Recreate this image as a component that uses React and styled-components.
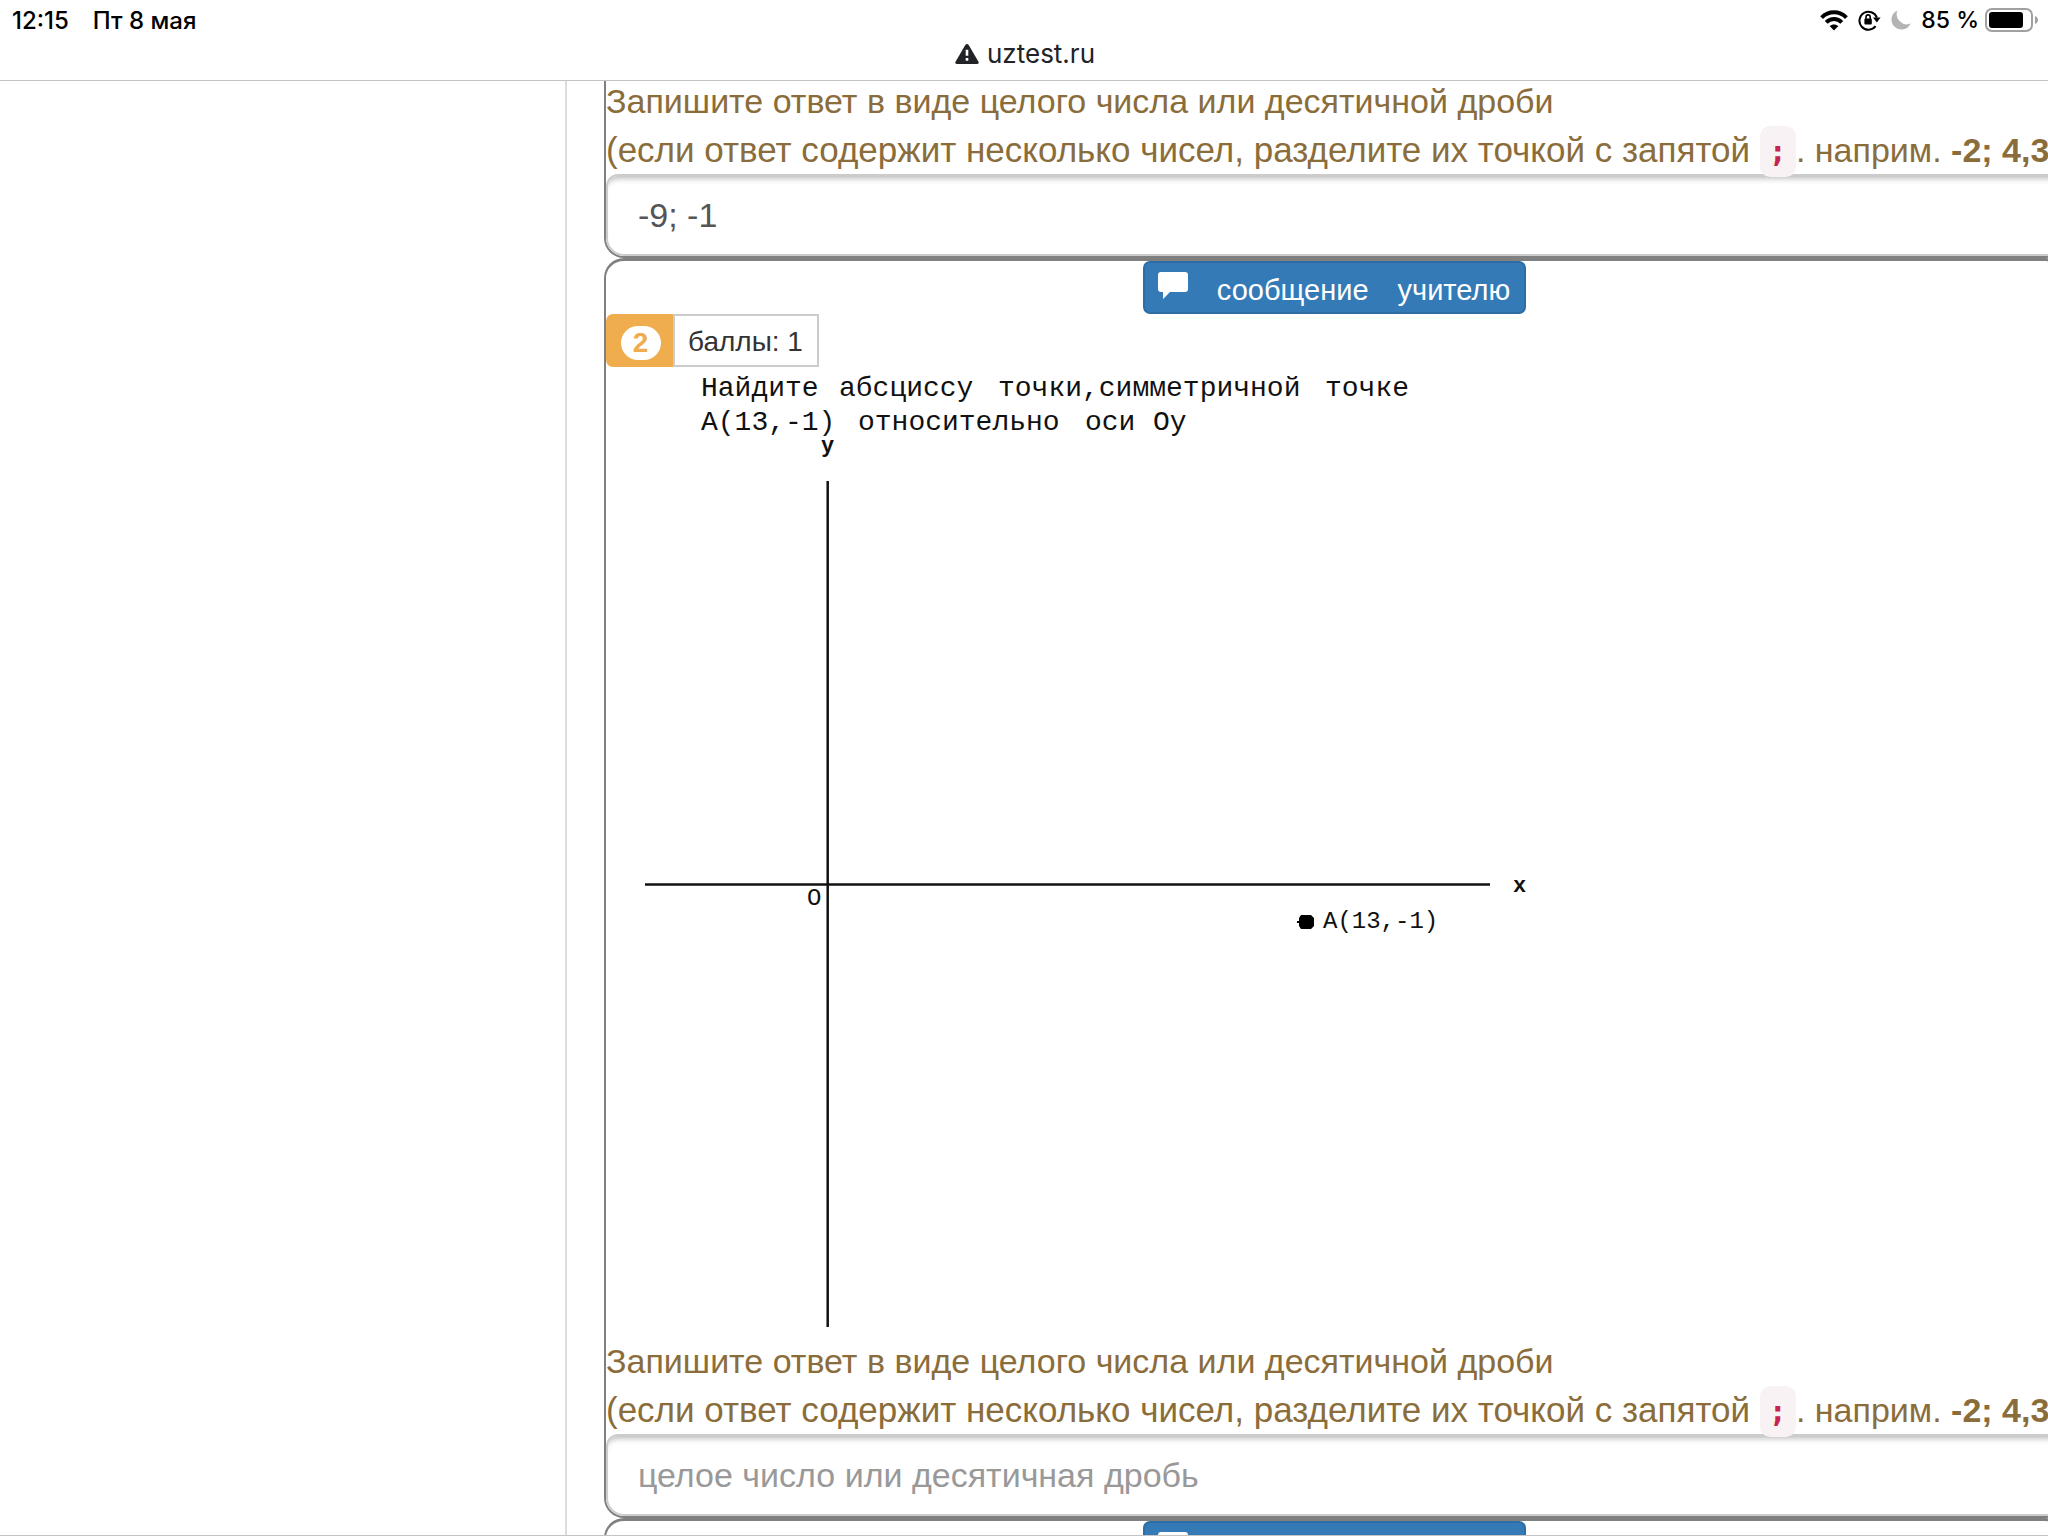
import React from "react";
import styled, { createGlobalStyle } from "styled-components";

const GlobalStyle = createGlobalStyle`
  *, *::before, *::after { box-sizing: border-box; }
  body {
    margin: 0;
    background: #fff;
    color: #333;
    font-family: "Liberation Sans", Arial, sans-serif;
  }
`;

const Page = styled.div`
  height: 100vh;
  padding-top: 77px;
  overflow: hidden;
  display: flex;
`;

const BrowserBar = styled.header`
  position: fixed;
  z-index: 5;
  top: 0;
  left: 0;
  right: 0;
  padding-bottom: 12px;
  background: #fff;
  border-bottom: 1px solid #c4c4c4;
  font-family: Inter, sans-serif;
`;

const StatusBar = styled.div`
  height: 40px;
  padding: 0 10px 0 12px;
  display: flex;
  align-items: center;
  justify-content: space-between;
  color: #000;
  font-size: 24px;
  font-weight: 500;
`;

const StatusGroup = styled.div`
  display: flex;
  align-items: center;
  gap: ${(p) => p.$gap}px;
`;

const Charge = styled.span`
  font-size: 23px;
`;

const Address = styled.button`
  display: flex;
  align-items: center;
  gap: 8px;
  height: 28px;
  margin: 0 auto;
  padding: 0 0 0 2px;
  border: 0;
  background: none;
  color: #222326;
  font: 400 26px/28px Inter, sans-serif;
`;

const Sidebar = styled.aside`
  flex: 0 0 567px;
  border-right: 2px solid #ddd;
`;

const Questions = styled.main`
  flex: 1;
  min-width: 0;
  margin: 0 -17px 0 37px;
`;

const ViewportEdge = styled.div`
  position: fixed;
  left: 0;
  right: 0;
  bottom: 0;
  height: 1px;
  background: #c4c4c4;
`;

const Card = styled.section`
  overflow: hidden;
  border: solid #808080;
  border-width: ${(p) => (p.$continued ? "0" : "3px")} 2px 2px;
  border-radius: ${(p) => (p.$continued ? "0 0 20px 20px" : "20px")};
`;

const MessageButton = styled.button`
  display: flex;
  align-items: center;
  gap: 29px;
  height: 53px;
  margin: 0 auto;
  padding: 4px 14px 0 13px;
  border: 2px solid #2e6da4;
  border-radius: 7px;
  background: #337ab7;
  color: #fff;
  font: 400 29px/40px "Liberation Sans", Arial, sans-serif;
`;

const ScoreRow = styled.div`
  display: flex;
  height: 53px;
  font-size: 28px;
  line-height: 51px;
`;

const NumberTag = styled.div`
  width: 67px;
  padding: 5px 0 0 2px;
  display: flex;
  align-items: center;
  justify-content: center;
  background: #f0ad4e;
  border-radius: 7px 0 0 7px;
`;

const NumberBadge = styled.span`
  width: 40px;
  height: 34px;
  border-radius: 17px;
  background: #fff;
  color: #f0ad4e;
  font-weight: 700;
  line-height: 34px;
  text-align: center;
`;

const Score = styled.div`
  padding: 0 14px 0 13px;
  border: 2px solid #ccc;
`;

const Figure = styled.svg`
  display: block;
  width: 970px;
  height: 970px;
  font-family: "Liberation Mono", "Courier New", monospace;
  fill: #111;
`;

const Hint = styled.label`
  position: relative;
  z-index: 1;
  display: block;
  color: #8a6d3b;
  font-size: 34px;
  line-height: 48px;
  white-space: nowrap;
`;

const HintNote = styled.span`
  display: block;
  height: 49px;
  font-size: 35px;
  line-height: 49px;
`;

const Example = styled.span`
  font-size: 34px;
`;

const Separator = styled.code`
  padding: 8px 9px;
  border-radius: 10px;
  background: #f9f2f4;
  color: #c7254e;
  font: 700 30px/30px "DejaVu Sans Mono", monospace;
`;

const AnswerInput = styled.input`
  display: block;
  width: 100%;
  height: 82px;
  padding: 0 30px;
  border: 2px solid #ccc;
  border-radius: 12px 12px 18px 18px;
  box-shadow: inset 0 7px 6px -5px rgba(0, 0, 0, 0.3);
  background: #fff;
  color: #555;
  font: 400 34px/48px "Liberation Sans", Arial, sans-serif;
  outline: none;

  &::placeholder {
    color: #999;
    opacity: 1;
  }
`;

function WifiIcon() {
  return (
    <svg width="28" height="21" viewBox="0 0 28 21" fill="none" stroke="#000" strokeWidth="4">
      <path d="M1.6 7.6C8.6.6 19.4.6 26.4 7.6" />
      <path d="M6.2 12.4C10.6 8 17.4 8 21.8 12.4" />
      <path d="M14 20.6l-4.4-4.5c2.6-2.1 6.2-2.1 8.8 0z" fill="#000" stroke="none" />
    </svg>
  );
}

function RotationLockIcon() {
  return (
    <svg width="23" height="22" viewBox="0 0 23 22" fill="none" stroke="#000" strokeWidth="2">
      <path d="M17.6 17.2A9 9 0 1 1 18.9 8.6" />
      <path d="M15 8.6h7.6l-3.8 5z" fill="#000" stroke="none" />
      <rect x="6.4" y="9.6" width="7.4" height="6" rx="1" fill="#000" stroke="none" />
      <path d="M8 10V8a2.1 2.1 0 0 1 4.2 0v2" strokeWidth="1.6" />
    </svg>
  );
}

function MoonIcon() {
  return (
    <svg width="20" height="20" viewBox="0 0 20 20" fill="#b4b4b4">
      <path d="M6.4.4A10 10 0 1 0 19.6 13.6 10.2 10.2 0 0 1 6.4.4z" />
    </svg>
  );
}

function BatteryIcon() {
  return (
    <svg width="53" height="24" viewBox="0 0 53 24">
      <rect x="1" y="1" width="46" height="22" rx="6" fill="none" stroke="#a0a0a0" strokeWidth="2" />
      <rect x="4" y="4" width="34" height="16" rx="3" fill="#000" />
      <path d="M50 8c4 1.6 4 6.4 0 8z" fill="#a0a0a0" />
    </svg>
  );
}

function WarningIcon() {
  return (
    <svg width="24" height="20" viewBox="0 0 24 20">
      <path d="M10.3.9q1.7-1.8 3.4 0l9.9 17q.8 2-1.4 2.1H1.8q-2.2-.1-1.4-2.1z" fill="#222326" />
      <path d="M10.7 5.8h2.6v6h-2.6zM10.7 14h2.6v2.8h-2.6z" fill="#fff" />
    </svg>
  );
}

function CommentIcon() {
  return (
    <svg width="30" height="35" viewBox="0 0 30 35" fill="#fff">
      <path d="M3 0h24q3 0 3 3v14q0 3-3 3H12l-7 7v-7H3q-3 0-3-3V3q0-3 3-3z" />
    </svg>
  );
}

function MessageTeacher() {
  return (
    <MessageButton type="button">
      <CommentIcon />
      <span>сообщение</span>
      <span>учителю</span>
    </MessageButton>
  );
}

function Answer({ id, value }) {
  return (
    <>
      <Hint htmlFor={id}>
        Запишите ответ в виде целого числа или десятичной дроби
        <HintNote>
          (если ответ содержит несколько чисел, разделите их точкой с запятой{" "}
          <Separator>;</Separator>
          <Example>
            . наприм. <b>-2; 4,3</b>
          </Example>
        </HintNote>
      </Hint>
      <AnswerInput id={id} defaultValue={value} placeholder="целое число или десятичная дробь" />
    </>
  );
}

function CoordinatePlane() {
  return (
    <Figure viewBox="0 0 970 970">
      <g fontSize="28">
        <text x="95" y="29">Найдите</text>
        <text x="233" y="29">абсциссу</text>
        <text x="392" y="29">точки,симметричной</text>
        <text x="719" y="29">точке</text>
        <text x="95" y="63">A(13,-1)</text>
        <text x="252" y="63">относительно</text>
        <text x="479" y="63">оси</text>
        <text x="547" y="63">Oy</text>
      </g>
      <g stroke="#111" strokeWidth="2.5">
        <path d="M39 517.5H884" />
        <path d="M221.7 114V960" />
      </g>
      <path d="M695 548h10l3 3v8l-3 3h-10l-2-3v-3h-2v-2h2v-3z" fill="#000" />
      <g fontSize="24">
        <text x="215" y="85" fontSize="22" fontWeight="700">y</text>
        <text x="201" y="538">O</text>
        <text x="907" y="525" fontSize="22" fontWeight="700">x</text>
        <text x="717" y="561">A(13,-1)</text>
      </g>
    </Figure>
  );
}

export default function App() {
  return (
    <>
      <GlobalStyle />
      <BrowserBar>
        <StatusBar>
          <StatusGroup $gap={24}>
            <span>12:15</span>
            <span>Пт 8 мая</span>
          </StatusGroup>
          <StatusGroup $gap={10}>
            <WifiIcon />
            <RotationLockIcon />
            <MoonIcon />
            <StatusGroup $gap={6}>
              <Charge>85 %</Charge>
              <BatteryIcon />
            </StatusGroup>
          </StatusGroup>
        </StatusBar>
        <Address type="button">
          <WarningIcon />
          uztest.ru
        </Address>
      </BrowserBar>
      <Page>
        <Sidebar />
        <Questions>
          <Card $continued>
            <Answer id="answer-1" value="-9; -1" />
          </Card>
          <Card>
            <MessageTeacher />
            <ScoreRow>
              <NumberTag>
                <NumberBadge>2</NumberBadge>
              </NumberTag>
              <Score>баллы: 1</Score>
            </ScoreRow>
            <CoordinatePlane />
            <Answer id="answer-2" />
          </Card>
          <Card>
            <MessageTeacher />
          </Card>
        </Questions>
      </Page>
      <ViewportEdge />
    </>
  );
}
